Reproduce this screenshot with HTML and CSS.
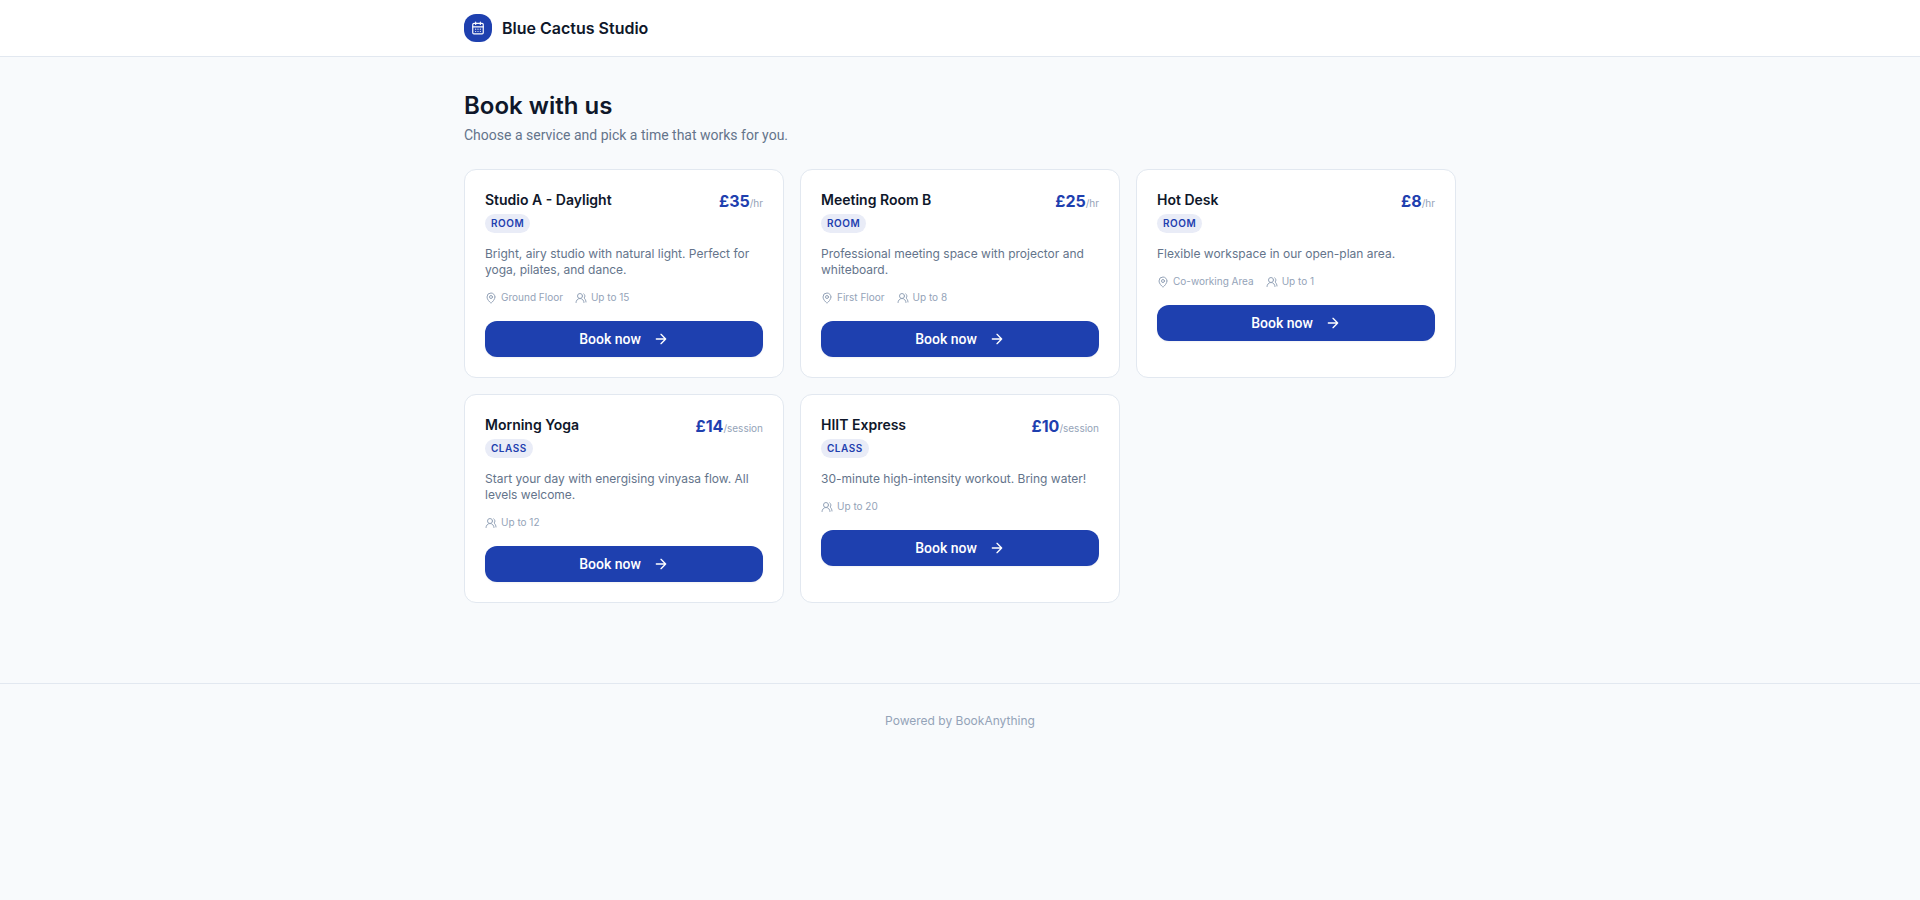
FILE: index.html
```html
<!DOCTYPE html>
<html lang="en">

<head>
  <meta charset="UTF-8">
  <meta name="viewport" content="width=device-width, initial-scale=1.0">
  <title>Blue Cactus Studio</title>
  <link rel="stylesheet" href="styles.css">
</head>

<body>
  <!-- Shared icons -->
  <svg class="sprite" aria-hidden="true">
    <symbol id="icon-calendar" viewBox="0 0 24 24">
      <path d="M8 2v4M16 2v4M3 10h18" />
      <rect x="3" y="4" width="18" height="18" rx="2" />
      <path d="M8 14h.01M12 14h.01M16 14h.01M8 18h.01M12 18h.01M16 18h.01" />
    </symbol>
    <symbol id="icon-pin" viewBox="0 0 24 24">
      <path d="M20 10c0 4.993-5.539 10.193-7.399 11.799a1 1 0 0 1-1.202 0C9.539 20.193 4 14.993 4 10a8 8 0 0 1 16 0" />
      <circle cx="12" cy="10" r="3" />
    </symbol>
    <symbol id="icon-users" viewBox="0 0 24 24">
      <path d="M18 21a8 8 0 0 0-16 0" />
      <circle cx="10" cy="8" r="5" />
      <path d="M22 20c0-3.37-2-6.5-4-8a5 5 0 0 0-.45-8.3" />
    </symbol>
    <symbol id="icon-arrow" viewBox="0 0 24 24">
      <path d="M5 12h14M12 5l7 7-7 7" />
    </symbol>
  </svg>

  <header class="header">
    <div class="container header-inner">
      <span class="logo"><svg class="icon icon-logo"><use href="#icon-calendar" /></svg></span>
      <span class="brand">Blue Cactus Studio</span>
    </div>
  </header>

  <main class="container main">
    <h1>Book with us</h1>
    <p class="intro">Choose a service and pick a time that works for you.</p>

    <div class="services">
      <article class="card">
        <div class="card-head">
          <div>
            <h2>Studio A - Daylight</h2>
            <span class="badge">ROOM</span>
          </div>
          <p class="price">£35<span>/hr</span></p>
        </div>
        <p class="description">Bright, airy studio with natural light. Perfect for yoga, pilates, and dance.</p>
        <div class="meta">
          <span><svg class="icon"><use href="#icon-pin" /></svg>Ground Floor</span>
          <span><svg class="icon"><use href="#icon-users" /></svg>Up to 15</span>
        </div>
        <button type="button">Book now<svg class="icon icon-arrow"><use href="#icon-arrow" /></svg></button>
      </article>

      <article class="card">
        <div class="card-head">
          <div>
            <h2>Meeting Room B</h2>
            <span class="badge">ROOM</span>
          </div>
          <p class="price">£25<span>/hr</span></p>
        </div>
        <p class="description">Professional meeting space with projector and whiteboard.</p>
        <div class="meta">
          <span><svg class="icon"><use href="#icon-pin" /></svg>First Floor</span>
          <span><svg class="icon"><use href="#icon-users" /></svg>Up to 8</span>
        </div>
        <button type="button">Book now<svg class="icon icon-arrow"><use href="#icon-arrow" /></svg></button>
      </article>

      <article class="card">
        <div class="card-head">
          <div>
            <h2>Hot Desk</h2>
            <span class="badge">ROOM</span>
          </div>
          <p class="price">£8<span>/hr</span></p>
        </div>
        <p class="description">Flexible workspace in our open-plan area.</p>
        <div class="meta">
          <span><svg class="icon"><use href="#icon-pin" /></svg>Co-working Area</span>
          <span><svg class="icon"><use href="#icon-users" /></svg>Up to 1</span>
        </div>
        <button type="button">Book now<svg class="icon icon-arrow"><use href="#icon-arrow" /></svg></button>
      </article>

      <article class="card">
        <div class="card-head">
          <div>
            <h2>Morning Yoga</h2>
            <span class="badge">CLASS</span>
          </div>
          <p class="price">£14<span>/session</span></p>
        </div>
        <p class="description">Start your day with energising vinyasa flow. All levels welcome.</p>
        <div class="meta">
          <span><svg class="icon"><use href="#icon-users" /></svg>Up to 12</span>
        </div>
        <button type="button">Book now<svg class="icon icon-arrow"><use href="#icon-arrow" /></svg></button>
      </article>

      <article class="card">
        <div class="card-head">
          <div>
            <h2>HIIT Express</h2>
            <span class="badge">CLASS</span>
          </div>
          <p class="price">£10<span>/session</span></p>
        </div>
        <p class="description">30-minute high-intensity workout. Bring water!</p>
        <div class="meta">
          <span><svg class="icon"><use href="#icon-users" /></svg>Up to 20</span>
        </div>
        <button type="button">Book now<svg class="icon icon-arrow"><use href="#icon-arrow" /></svg></button>
      </article>
    </div>
  </main>

  <footer class="footer">Powered by BookAnything</footer>
</body>

</html>
```
FILE: styles.css
```css
* {
  box-sizing: border-box;
}

body {
  margin: 0;
  font-family: Inter, "Liberation Sans", sans-serif;
  background-color: #f8fafc;
  color: #0f172a;
}

h1,
h2,
p {
  margin: 0;
}

.sprite {
  display: none;
}

.icon {
  flex: none;
  width: 12px;
  height: 12px;
  fill: none;
  stroke: currentColor;
  stroke-width: 2;
  stroke-linecap: round;
  stroke-linejoin: round;
}

.container {
  max-width: 1024px;
  margin: 0 auto;
  padding: 0 16px;
}

.header {
  background-color: #fff;
  border-bottom: 1px solid #e2e8f0;
}

.header-inner {
  display: flex;
  align-items: center;
  gap: 10px;
  height: 56px;
}

.logo {
  display: flex;
  align-items: center;
  justify-content: center;
  width: 28px;
  height: 28px;
  border-radius: 12px;
  background-color: #1e40af;
  color: #fff;
}

.icon-logo {
  width: 14px;
  height: 14px;
}

.brand {
  font-size: 16px;
  font-weight: 600;
}

.main {
  padding-top: 32px;
  padding-bottom: 32px;
}

h1 {
  font-size: 24px;
  line-height: 34px;
  font-weight: 600;
}

.intro {
  margin: 2px 0 24px;
  font-family: Roboto, "Liberation Sans", sans-serif;
  font-size: 14px;
  line-height: 20px;
  color: #64748b;
}

.services {
  display: grid;
  grid-template-columns: repeat(3, 1fr);
  gap: 16px;
}

.card {
  padding: 20px;
  background-color: #fff;
  border: 1px solid #e2e8f0;
  border-radius: 12px;
}

.card-head {
  display: flex;
  justify-content: space-between;
  align-items: flex-start;
  margin-bottom: 13px;
}

h2 {
  margin-bottom: 4px;
  font-size: 14px;
  line-height: 20px;
  font-weight: 600;
}

.badge {
  display: block;
  width: fit-content;
  padding: 2px 6px;
  border-radius: 10px;
  background-color: #e9ecf7;
  color: #1e40af;
  font-size: 10px;
  line-height: 15px;
  font-weight: 600;
  letter-spacing: 0.5px;
}

.price {
  font-size: 16px;
  line-height: 22px;
  font-weight: 700;
  color: #1e40af;
}

.price span {
  font-size: 10px;
  font-weight: 400;
  color: #94a3b8;
}

.description {
  margin-bottom: 12px;
  font-size: 12px;
  line-height: 16px;
  color: #64748b;
}

.meta {
  display: flex;
  gap: 12px;
  margin-bottom: 16px;
  font-size: 10px;
  line-height: 15px;
  color: #94a3b8;
}

.meta span {
  display: flex;
  align-items: center;
  gap: 4px;
}

button {
  display: flex;
  align-items: center;
  justify-content: center;
  gap: 12px;
  width: 100%;
  height: 36px;
  border: none;
  border-radius: 12px;
  background-color: #1e40af;
  color: #fff;
  font-family: Roboto, "Liberation Sans", sans-serif;
  font-size: 14px;
  font-weight: 500;
  box-shadow: 0 1px 2px rgba(0, 0, 0, 0.05);
  cursor: pointer;
}

.icon-arrow {
  width: 16px;
  height: 16px;
}

.footer {
  margin-top: 48px;
  padding: 24px 16px;
  border-top: 1px solid #e2e8f0;
  font-size: 12px;
  line-height: 26px;
  text-align: center;
  color: #94a3b8;
}

@media (max-width: 900px) {
  .services {
    grid-template-columns: repeat(2, 1fr);
  }
}

@media (max-width: 600px) {
  .services {
    grid-template-columns: 1fr;
  }
}
```
